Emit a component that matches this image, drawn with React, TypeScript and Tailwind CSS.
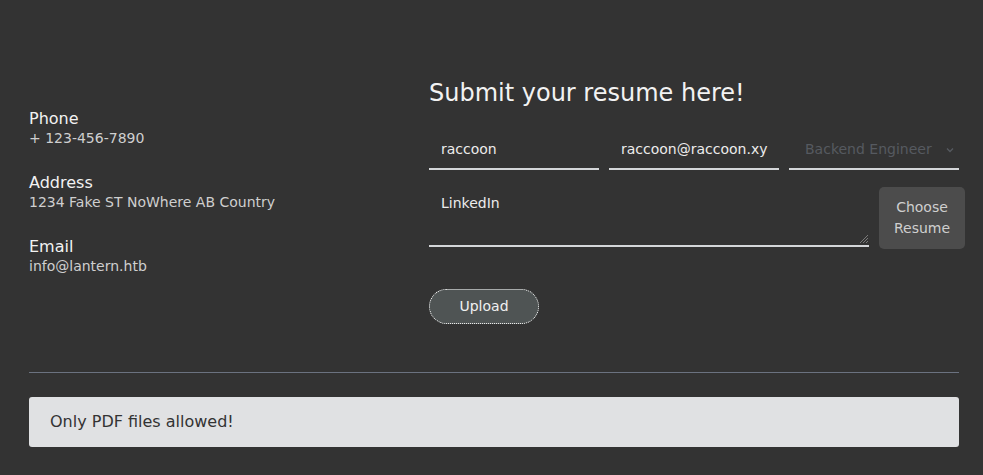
import React from "react";

export default function App() {
  return (
    <div
      className="w-[983px] h-[475px] bg-[#333333] overflow-hidden"
      style={{ fontFamily: '"DejaVu Sans", sans-serif' }}
    >
      <div className="pl-[29px] pr-[24px]">
        <div className="flex items-start">
          <div className="w-[400px] shrink-0 pt-[107px] flex flex-col gap-[16px]">
            <div>
              <div className="text-[16px] leading-[23px] text-[#f2f2f2]">Phone</div>
              <div className="text-[14px] leading-[16px] text-[#cfcfcf]">+ 123-456-7890</div>
            </div>
            <div className="mt-[9px]">
              <div className="text-[16px] leading-[23px] text-[#f2f2f2]">Address</div>
              <div className="text-[14px] leading-[16px] text-[#cfcfcf]">1234 Fake ST NoWhere AB Country</div>
            </div>
            <div className="mt-[9px]">
              <div className="text-[16px] leading-[23px] text-[#f2f2f2]">Email</div>
              <div className="text-[14px] leading-[16px] text-[#cfcfcf]">info@lantern.htb</div>
            </div>
          </div>
          <div className="w-[530px] shrink-0 pt-[77px]">
            <h1 className="text-[24px] leading-[32px] text-[#f2f2f2]">Submit your resume here!</h1>
            <div className="mt-[19px] flex gap-[10px]">
              <div className="w-[170px] h-[42px] border-b-2 border-[#d4d6d9] px-[12px] pt-[3px] flex items-center text-[14px] text-[#ececec]">
                raccoon
              </div>
              <div className="w-[170px] h-[42px] border-b-2 border-[#d4d6d9] px-[12px] pt-[3px] flex items-center text-[14px] text-[#ececec]">
                raccoon@raccoon.xy
              </div>
              <div className="w-[170px] h-[42px] border-b-2 border-[#d4d6d9] pl-[16px] pr-[4px] pt-[3px] flex items-center justify-between text-[14px] text-[#565a60]">
                <span>Backend Engineer</span>
                <svg width="10" height="10" viewBox="0 0 10 10" fill="none" stroke="#565a60" strokeWidth="1.3">
                  <path d="M2 3.5 L5 6.5 L8 3.5" />
                </svg>
              </div>
            </div>
            <div className="mt-[11px] flex items-start gap-[10px]">
              <div className="relative w-[440px] h-[66px] shrink-0 border-b-2 border-[#d4d6d9] px-[12px] pt-[12px] text-[14px] leading-[20px] text-[#ececec]">
                LinkedIn
                <svg className="absolute right-0 bottom-[1px]" width="10" height="10" viewBox="0 0 10 10" stroke="#7a7a7a" strokeWidth="1">
                  <path d="M9 1 L1 9 M9 4 L4 9 M9 7 L7 9" />
                </svg>
              </div>
              <div className="mt-[6px] w-[86px] h-[62px] shrink-0 rounded-[5px] bg-[#4c4c4c] pt-[10px] flex flex-col items-center justify-start text-[14px] leading-[21px] text-[#cfcfcf]">
                <span>Choose</span>
                <span>Resume</span>
              </div>
            </div>
            <div className="mt-[40px]">
              <button className="w-[110px] h-[35px] rounded-full bg-[#4f5454] border border-dotted border-white text-[14px] text-[#f0f0f0]">
                Upload
              </button>
            </div>
          </div>
        </div>
        <div className="mt-[48px] h-px bg-[#6b7280]" />
        <div className="mt-[24px] h-[50px] rounded-[3px] bg-[#e0e1e3] px-[21px] flex items-center text-[16px] text-[#333333]">
          Only PDF files allowed!
        </div>
      </div>
    </div>
  );
}
